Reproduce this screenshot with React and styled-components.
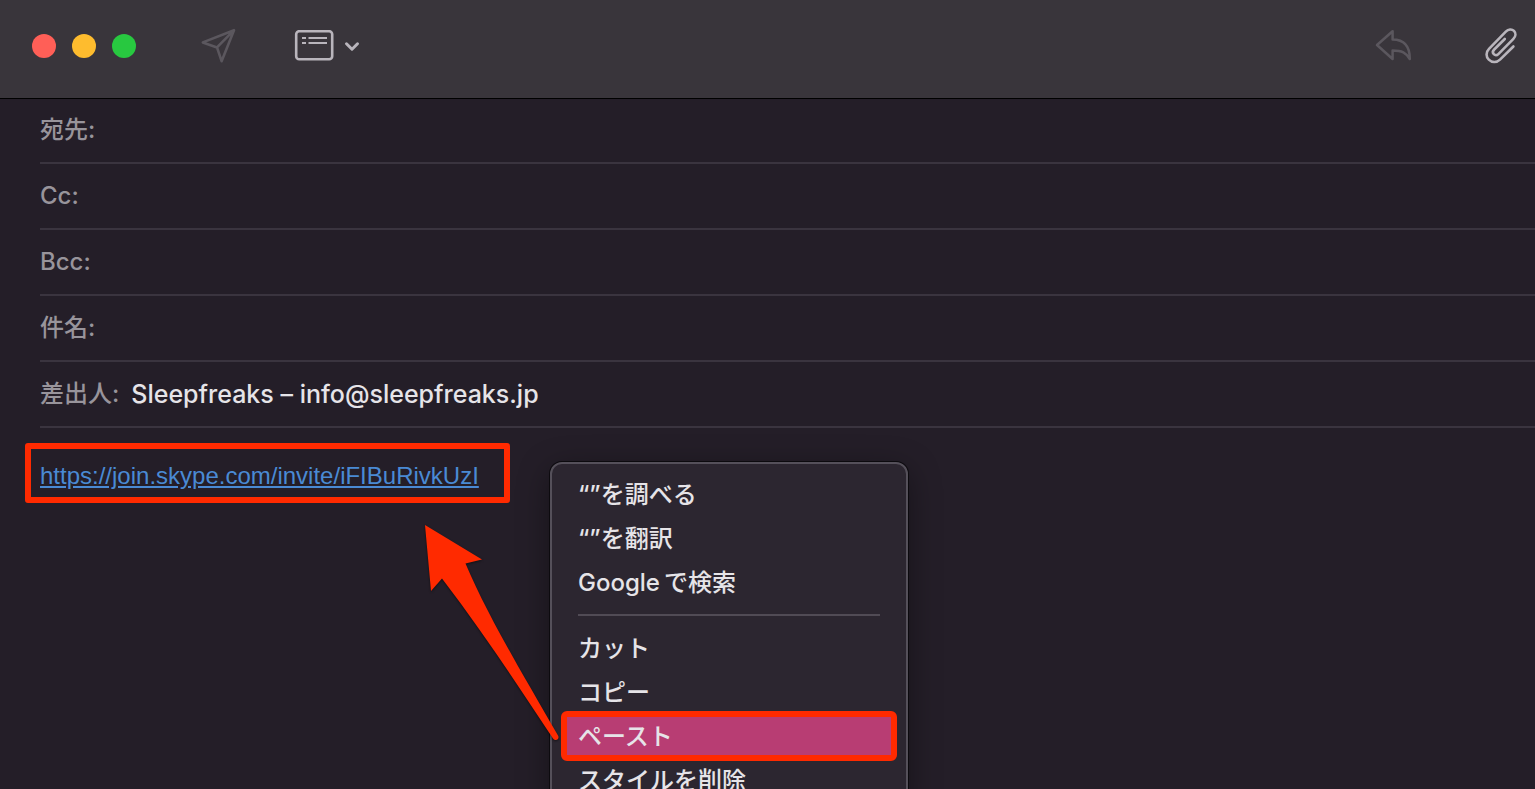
import styled, { createGlobalStyle } from "styled-components";

const headerFields = [
  { id: "to", label: "宛先:" },
  { id: "cc", label: "Cc:" },
  { id: "bcc", label: "Bcc:" },
  { id: "subject", label: "件名:" },
];

const lookupItems = ["“”を調べる", "“”を翻訳", "Google\u2009で検索"];
const editItems = ["カット", "コピー", "ペースト", "スタイルを削除"];

const SendIcon = () => (
  <svg width="36" height="36" viewBox="0 0 36 36" fill="none">
    <path
      d="M34 2.2 L2.8 14.4 L17 19.4 L21.6 33.2 Z M34 2.2 L17 19.4"
      stroke="currentColor"
      strokeWidth="2.6"
      strokeLinejoin="round"
      strokeLinecap="round"
    />
  </svg>
);

const HeaderListIcon = () => (
  <svg width="40" height="32" viewBox="0 0 40 32" fill="none">
    <rect x="2.2" y="1.2" width="36" height="28" rx="3" stroke="currentColor" strokeWidth="2.6" />
    <path
      d="M8 8 H12 M14.5 8 H33 M8 13 H12 M14.5 13 H33"
      stroke="currentColor"
      strokeWidth="2.2"
    />
  </svg>
);

const ChevronIcon = () => (
  <svg width="16" height="12" viewBox="0 0 16 12" fill="none">
    <path
      d="M2.5 3.8 L8 9.2 L13.5 3.8"
      stroke="currentColor"
      strokeWidth="3"
      strokeLinejoin="round"
      strokeLinecap="round"
    />
  </svg>
);

const ReplyIcon = () => (
  <svg width="38" height="36" viewBox="0 0 38 36" fill="none">
    <path
      d="M2 17 L17.6 3.2 V11.6 C29.5 11.6 34.8 19 34.8 31 C31 24.5 27 22.4 17.6 22.4 V31 Z"
      stroke="currentColor"
      strokeWidth="2.5"
      strokeLinejoin="round"
    />
  </svg>
);

const PaperclipIcon = () => (
  <svg width="36" height="40" viewBox="0 0 36 40" fill="none">
    <path
      d="M30.4 20.5 L17 33.6 C13.5 37 8.7 36.5 5.8 33.6 C2.9 30.7 2.7 26.2 6 22.8 L22.8 5.6 C25.3 3 28.9 2.8 31 4.9 C33.1 7.1 32.9 10.3 30.4 12.8 L15.6 27.8 C14 29.4 12 29.4 10.8 28.2 C9.6 27 9.6 25.1 11.2 23.5 L21.8 13"
      stroke="currentColor"
      strokeWidth="2.6"
      strokeLinecap="round"
    />
  </svg>
);

const App = () => {
  return (
    <Window>
      <GlobalStyle />
      <Toolbar>
        <TrafficLights>
          <Light $color="#ff5f57" aria-label="閉じる" />
          <Light $color="#febc2e" aria-label="しまう" />
          <Light $color="#28c840" aria-label="拡大" />
        </TrafficLights>
        <ToolButton $dim aria-label="送信">
          <SendIcon />
        </ToolButton>
        <HeaderButton aria-label="ヘッダ">
          <HeaderListIcon />
          <ChevronIcon />
        </HeaderButton>
        <Actions>
          <ToolButton $dim aria-label="返信">
            <ReplyIcon />
          </ToolButton>
          <ToolButton aria-label="添付">
            <PaperclipIcon />
          </ToolButton>
        </Actions>
      </Toolbar>

      <Fields>
        {headerFields.map((field) => (
          <Field key={field.id}>
            <Label htmlFor={field.id}>{field.label}</Label>
            <Input id={field.id} type="text" />
          </Field>
        ))}
        <Field>
          <Label htmlFor="from">差出人:</Label>
          <Input id="from" type="text" defaultValue="Sleepfreaks – info@sleepfreaks.jp" />
        </Field>
      </Fields>

      <Body>
        <LinkFrame>
          <Link href="https://join.skype.com/invite/iFIBuRivkUzI">
            https://join.skype.com/invite/iFIBuRivkUzI
          </Link>
        </LinkFrame>

        <Menu>
          {lookupItems.map((item) => (
            <MenuItem key={item}>{item}</MenuItem>
          ))}
          <Separator />
          {editItems.map((item) => (
            <MenuItem key={item} $active={item === "ペースト"}>
              {item}
            </MenuItem>
          ))}
        </Menu>

        <Arrow width="150" height="230" viewBox="0 0 150 230">
          <path
            d="M10 10 L67 44.5 L50.5 48.5 C74 104 112 166 143 220.5 C145 224 141 227 138 223.5 C104 172 68 117 27 63.5 L16 76 Z"
            fill="#ff2a00"
          />
        </Arrow>
      </Body>
    </Window>
  );
};

const GlobalStyle = createGlobalStyle`
  * {
    box-sizing: border-box;
  }

  body {
    margin: 0;
    background: #241e28;
  }

  button,
  input {
    font: inherit;
    color: inherit;
    border: none;
    outline: none;
    background: none;
    padding: 0;
    margin: 0;
  }

  svg {
    display: block;
  }
`;

const Window = styled.main`
  display: flex;
  flex-direction: column;
  height: 100vh;
  overflow: hidden;
  background: #241e28;
  color: #e6e4e8;
  font-family: Inter, "Noto Sans CJK JP", sans-serif;
  font-size: 24px;
  font-weight: 500;
  line-height: 32px;
`;

const Toolbar = styled.header`
  display: flex;
  align-items: center;
  flex: none;
  height: 98px;
  padding: 0 16px 6px 32px;
  background: #39353b;
  box-shadow: 0 1px 0 #000;
  z-index: 1;
`;

const TrafficLights = styled.div`
  display: flex;
  gap: 16px;
  margin-right: 64px;
`;

const Light = styled.button`
  width: 24px;
  height: 24px;
  border-radius: 50%;
  background: ${({ $color }) => $color};
`;

const ToolButton = styled.button`
  color: ${({ $dim }) => ($dim ? "#5b575e" : "#b9b5bc")};
`;

const HeaderButton = styled(ToolButton)`
  display: flex;
  align-items: center;
  gap: 10px;
  margin-left: 58px;
`;

const Actions = styled.div`
  display: flex;
  align-items: center;
  gap: 70px;
  margin-left: auto;
`;

const Fields = styled.div`
  flex: none;
  padding-left: 40px;
`;

const Field = styled.div`
  display: flex;
  align-items: center;
  gap: 12px;
  height: 66px;
  border-bottom: 2px solid #3a343f;
`;

const Label = styled.label`
  color: #98949b;
`;

const Input = styled.input`
  flex: 1;
  min-width: 0;
  font-size: 25px;
`;

const Body = styled.section`
  position: relative;
  flex: 1;
  padding: 15px 25px;
`;

const LinkFrame = styled.div`
  width: fit-content;
  padding: 11px 25px 5px 9px;
  border: 6px solid #ff2a00;
  border-radius: 3px;
`;

const Link = styled.a`
  color: #4a8ad4;
  font-family: "Liberation Sans", sans-serif;
  font-weight: 400;
`;

const Menu = styled.div`
  position: absolute;
  top: 34px;
  left: 550px;
  width: 358px;
  padding: 8px 12px;
  border: 2px solid #55505a;
  border-radius: 12px;
  background: #2c2630;
  box-shadow: 0 0 0 1px #0c0a0e, 0 8px 32px rgba(0, 0, 0, 0.4);
`;

const MenuItem = styled.button`
  display: block;
  width: 100%;
  height: 44px;
  padding: 2px 14px 0;
  text-align: left;
  white-space: nowrap;

  ${({ $active }) =>
    $active &&
    `
    background: #b83d73;
    border-radius: 3px;
    outline: 6px solid #ff2a00;
    outline-offset: -3px;
  `}
`;

const Separator = styled.hr`
  height: 2px;
  margin: 10px 14px;
  border: none;
  background: #514b55;
`;

const Arrow = styled.svg`
  position: absolute;
  top: 87px;
  left: 415px;
  filter: drop-shadow(0 1px 1px rgba(0, 0, 0, 0.5));
`;

export default App;
